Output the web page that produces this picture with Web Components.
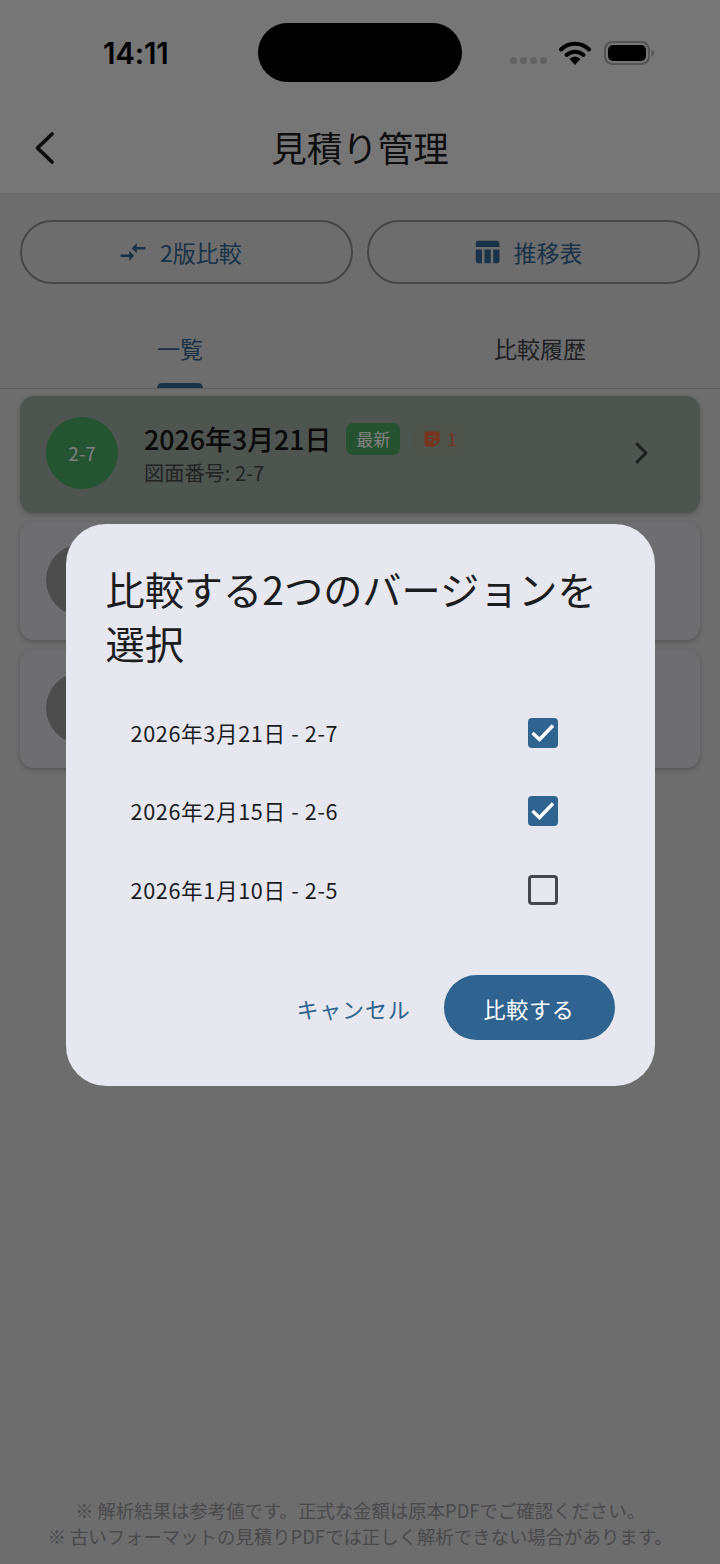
<!DOCTYPE html>
<html lang="ja">
<head>
<meta charset="UTF-8">
<meta name="viewport" content="width=device-width, initial-scale=1.0">
<title>見積り管理</title>
<style>
    html, body { margin: 0; padding: 0; }
    body {
        background: #dadadc;
        font-family: "Noto Sans CJK JP", "Noto Sans", sans-serif;
        color: #1a1c1e;
    }
    #screen {
        position: relative;
        height: 1564px;
        overflow: hidden;
        display: flex;
        flex-direction: column;
    }
</style>
</head>
<body>
<div id="screen">
    <app-header title-text="見積り管理"></app-header>
    <div id="actions" style="display:flex;gap:14px;padding:27px 20px 0">
        <action-button icon="compare">2版比較</action-button>
        <action-button icon="table">推移表</action-button>
    </div>
    <tab-bar first="一覧" second="比較履歴"></tab-bar>
    <version-list>
        <version-card latest code="2-7" date="2026年3月21日" sub="図面番号: 2-7" notes="1"></version-card>
        <version-card></version-card>
        <version-card style="margin-top:1px"></version-card>
    </version-list>
    <footer-note>
        <div>※ 解析結果は参考値です。正式な金額は原本PDFでご確認ください。</div>
        <div>※ 古いフォーマットの見積りPDFでは正しく解析できない場合があります。</div>
    </footer-note>

    <compare-dialog heading="比較する2つのバージョンを選択">
        <version-option checked>2026年3月21日 - 2-7</version-option>
        <version-option checked>2026年2月15日 - 2-6</version-option>
        <version-option>2026年1月10日 - 2-5</version-option>
    </compare-dialog>
</div>

<script>
    const ICONS = {
        compare: '<path d="M9.01 14H2v2h7.01v3L13 15l-3.99-4v3zm5.98-1v-3H22V8h-7.01V5L11 9l3.99 4z"/>',
        table: '<path d="M10 10.02h5V21h-5zM17 21h3c1.1 0 2-.9 2-2v-9h-5v11zm3-18H5c-1.1 0-2 .9-2 2v3h19V5c0-1.1-.9-2-2-2zM3 19c0 1.1.9 2 2 2h3V10H3v9z"/>',
        note: '<path d="M19 3H4.99C3.89 3 3 3.9 3 5l.01 14c0 1.1.89 2 1.99 2h10l6-6V5c0-1.1-.9-2-2-2zM7 8h10v2H7V8zm5 6H7v-2h5v2zm2 5.5V14h5.5L14 19.5z"/>'
    };

    class AppHeader extends HTMLElement {
        constructor() {
            super();
            this.attachShadow({ mode: 'open' });
            this.shadowRoot.innerHTML = `
                <style>
                    :host { display: block; background: #ececec; height: 193px; flex: none; }
                    .status { height: 105px; display: flex; align-items: flex-start; position: relative; }
                    .time {
                        font: 600 29.5px/1 Inter, Roboto, sans-serif;
                        color: #000;
                        margin: 39px 0 0 103px;
                        letter-spacing: -0.2px;
                    }
                    .island {
                        position: absolute; left: 258px; top: 23px;
                        width: 204px; height: 59px;
                        border-radius: 30px; background: #000;
                    }
                    .indicators {
                        position: absolute; right: 66px; top: 40px;
                        display: flex; align-items: center;
                    }
                    .dots { display: flex; gap: 3px; margin: 15px 11px 0 0; }
                    .dots i { width: 7px; height: 7px; border-radius: 50%; background: #c4c4c4; display: block; }
                    .nav {
                        height: 88px; display: flex; align-items: center; justify-content: center;
                        position: relative; margin-top: -1px;
                    }
                    .back { position: absolute; left: 34px; top: 27px; }
                    h1 {
                        margin: 0 0 2px; font-weight: 400; font-size: 35.5px; line-height: 48px;
                        color: #1c1c1e;
                    }
                </style>
                <div class="status">
                    <span class="time">14:11</span>
                    <div class="island"></div>
                    <div class="indicators">
                        <div class="dots"><i></i><i></i><i></i><i></i></div>
                        <svg width="34" height="26" viewBox="0 0 34 26" style="margin-right:12px">
                            <path d="M3 9.5a20 20 0 0 1 28 0" fill="none" stroke="#000" stroke-width="4" stroke-linecap="round"/>
                            <path d="M8.5 15a12.4 12.4 0 0 1 17 0" fill="none" stroke="#000" stroke-width="4" stroke-linecap="round"/>
                            <path d="M11.5 19 Q17 14 22.5 19 L17 25 Z" fill="#000"/>
                        </svg>
                        <svg width="50" height="26" viewBox="0 0 50 26">
                            <rect x="1" y="2" width="44" height="22" rx="7.5" fill="none" stroke="#a6a6a6" stroke-width="2"/>
                            <rect x="4" y="5" width="38" height="16" rx="5" fill="#000"/>
                            <path d="M47.5 9.5c1.6.5 2.5 2 2.5 3.5s-.9 3-2.5 3.5z" fill="#a6a6a6"/>
                        </svg>
                    </div>
                </div>
                <div class="nav">
                    <svg class="back" width="24" height="34" viewBox="0 0 24 34">
                        <path d="M18 3 L3.5 17 L18 31" fill="none" stroke="#1c1c1e" stroke-width="3.8" stroke-linecap="round" stroke-linejoin="round"/>
                    </svg>
                    <h1></h1>
                </div>
            `;
        }
        connectedCallback() {
            this.shadowRoot.querySelector('h1').textContent = this.getAttribute('title-text');
        }
    }

    class ActionButton extends HTMLElement {
        constructor() {
            super();
            this.attachShadow({ mode: 'open' });
            this.shadowRoot.innerHTML = `
                <style>
                    :host {
                        flex: 1; display: flex; align-items: center; justify-content: center; gap: 12px;
                        height: 64px; box-sizing: border-box; padding-right: 13px;
                        border: 2px solid #8a8c90; border-radius: 32px;
                        color: #33658f; font-size: 23px; line-height: 32px;
                    }
                    svg { width: 30px; height: 30px; fill: currentColor; flex: none; }
                </style>
                <svg viewBox="0 0 24 24"></svg><slot></slot>
            `;
        }
        connectedCallback() {
            this.shadowRoot.querySelector('svg').innerHTML = ICONS[this.getAttribute('icon')];
        }
    }

    class TabBar extends HTMLElement {
        constructor() {
            super();
            this.attachShadow({ mode: 'open' });
            this.shadowRoot.innerHTML = `
                <style>
                    :host {
                        display: grid; grid-template-columns: 1fr 1fr;
                        height: 105px; box-sizing: border-box; flex: none;
                        border-bottom: 1.5px solid #b4b4b6;
                        font-size: 23px;
                    }
                    .tab { display: flex; justify-content: center; padding-top: 46px; }
                    .label { position: relative; height: 57.5px; line-height: 36px; }
                    .on .label { color: #33658f; }
                    .off .label { color: #3e4044; }
                    .on .label::after {
                        content: ""; position: absolute; left: 0; right: 0; bottom: 0;
                        height: 5px; background: #33658f; border-radius: 5px 5px 0 0;
                    }
                </style>
                <div class="tab on"><span class="label" id="a"></span></div>
                <div class="tab off"><span class="label" id="b"></span></div>
            `;
        }
        connectedCallback() {
            this.shadowRoot.getElementById('a').textContent = this.getAttribute('first');
            this.shadowRoot.getElementById('b').textContent = this.getAttribute('second');
        }
    }

    class VersionList extends HTMLElement {
        constructor() {
            super();
            this.attachShadow({ mode: 'open' });
            this.shadowRoot.innerHTML = `
                <style>
                    :host { display: flex; flex-direction: column; gap: 9px; padding: 7px 20px 0; flex: 1; }
                </style>
                <slot></slot>
            `;
        }
    }

    class VersionCard extends HTMLElement {
        constructor() {
            super();
            this.attachShadow({ mode: 'open' });
            this.shadowRoot.innerHTML = `
                <style>
                    :host {
                        display: flex; align-items: center; box-sizing: border-box;
                        height: 118px; padding: 0 26px 2px;
                        background: #dddde0; border-radius: 14px;
                        box-shadow: 0 2px 5px rgba(0,0,0,.22);
                    }
                    :host([latest]) { background: #9ca89e; height: 117px; padding-bottom: 4px; }
                    .avatar {
                        width: 72px; height: 72px; border-radius: 50%; background: #9a9a9a; flex: none;
                        display: flex; align-items: center; justify-content: center;
                        color: #fff; font-size: 19px; margin-right: 26px;
                    }
                    :host([latest]) .avatar { background: #4aa865; }
                    .body { flex: 1; min-width: 0; }
                    .line { display: flex; align-items: center; height: 40px; }
                    .date { font-size: 26.8px; font-weight: 500; color: #141414; line-height: 40px; }
                    .tag {
                        margin-left: 15px; width: 54px; height: 32px; border-radius: 7px;
                        background: #4ea565; color: #fff; font-size: 17px;
                        display: flex; align-items: center; justify-content: center;
                    }
                    .notes {
                        margin-left: 14px; height: 32px; padding: 0 6px 0 8px; border-radius: 7px;
                        display: flex; align-items: center; color: #f0683c; font-size: 17px;
                        background: rgba(255,107,61,.06); gap: 5px;
                    }
                    .notes svg { width: 20px; height: 20px; fill: currentColor; }
                    .sub { font-size: 20.2px; line-height: 28px; color: #44464a; }
                    .chev { margin-right: 24px; }
                </style>
            `;
        }
        connectedCallback() {
            const root = this.shadowRoot;
            if (root.querySelector('.avatar')) return;
            const wrap = document.createElement('template');
            if (!this.hasAttribute('latest')) {
                // the rest of these cards sits behind the dialog
                wrap.innerHTML = '<div class="avatar"></div>';
            } else {
                wrap.innerHTML = `
                    <div class="avatar">${this.getAttribute('code')}</div>
                    <div class="body">
                        <div class="line">
                            <span class="date">${this.getAttribute('date')}</span>
                            <span class="tag">最新</span>
                            <span class="notes"><svg viewBox="0 0 24 24">${ICONS.note}</svg>${this.getAttribute('notes')}</span>
                        </div>
                        <div class="sub">${this.getAttribute('sub')}</div>
                    </div>
                    <svg class="chev" width="16" height="24" viewBox="0 0 16 24">
                        <path d="M3 3 L12 12 L3 21" fill="none" stroke="#3a3c40" stroke-width="3" stroke-linecap="round" stroke-linejoin="round"/>
                    </svg>
                `;
            }
            root.appendChild(wrap.content.cloneNode(true));
        }
    }

    class FooterNote extends HTMLElement {
        constructor() {
            super();
            this.attachShadow({ mode: 'open' });
            this.shadowRoot.innerHTML = `
                <style>
                    :host {
                        display: block; flex: none; text-align: center; white-space: nowrap;
                        font-size: 18.4px; line-height: 26px; color: #949497;
                        padding-bottom: 15px;
                    }
                </style>
                <slot></slot>
            `;
        }
    }

    class CompareDialog extends HTMLElement {
        constructor() {
            super();
            this.attachShadow({ mode: 'open' });
            this.shadowRoot.innerHTML = `
                <style>
                    :host {
                        position: absolute; inset: 0;
                        background: rgba(0,0,0,.5);
                        display: flex; align-items: flex-start; justify-content: center;
                        padding-top: 524px; box-sizing: border-box;
                    }
                    .panel {
                        width: 589px; height: 562px; box-sizing: border-box;
                        background: #e6e7ef; border-radius: 40px;
                        padding: 38px 40px 46px;
                        display: flex; flex-direction: column;
                    }
                    h2 {
                        margin: 0; font-weight: 400; font-size: 39.2px; line-height: 53.5px;
                        color: #1a1c1e; height: 108px;
                    }
                    .options { display: flex; flex-direction: column; margin-top: 23px; flex: 1; }
                    .actions { display: flex; align-items: center; justify-content: flex-end; gap: 33px; }
                    .cancel, .go { font-size: 22px; letter-spacing: .8px; line-height: 32px; }
                    .cancel { color: #2f6390; }
                    .go {
                        width: 171px; height: 65px; border-radius: 33px; background: #2f6390; color: #fff;
                        display: flex; align-items: center; justify-content: center;
                    }
                </style>
                <div class="panel" role="dialog">
                    <h2></h2>
                    <div class="options"><slot></slot></div>
                    <div class="actions">
                        <span class="cancel">キャンセル</span>
                        <span class="go">比較する</span>
                    </div>
                </div>
            `;
        }
        connectedCallback() {
            this.shadowRoot.querySelector('h2').textContent = this.getAttribute('heading');
        }
    }

    class VersionOption extends HTMLElement {
        constructor() {
            super();
            this.attachShadow({ mode: 'open' });
            this.shadowRoot.innerHTML = `
                <style>
                    :host {
                        display: flex; align-items: center; justify-content: space-between;
                        height: 78.5px; padding: 0 57px 0 25px;
                        font-size: 21.6px; color: #1a1c1e; letter-spacing: .65px;
                    }
                    .box {
                        width: 30px; height: 30px; box-sizing: border-box; border-radius: 4px; margin-top: 1px;
                        border: 3px solid #44474c; display: flex; align-items: center; justify-content: center;
                    }
                    :host([checked]) .box { background: #2f6390; border-color: #2f6390; }
                    svg { display: none; }
                    :host([checked]) svg { display: block; }
                </style>
                <span><slot></slot></span>
                <span class="box">
                    <svg width="24" height="24" viewBox="0 0 24 24">
                        <path d="M1.5 12 L8.5 18.5 L22 4.5" fill="none" stroke="#fff" stroke-width="3.4"/>
                    </svg>
                </span>
            `;
        }
    }

    customElements.define('app-header', AppHeader);
    customElements.define('action-button', ActionButton);
    customElements.define('tab-bar', TabBar);
    customElements.define('version-list', VersionList);
    customElements.define('version-card', VersionCard);
    customElements.define('footer-note', FooterNote);
    customElements.define('compare-dialog', CompareDialog);
    customElements.define('version-option', VersionOption);
</script>
</body>
</html>
